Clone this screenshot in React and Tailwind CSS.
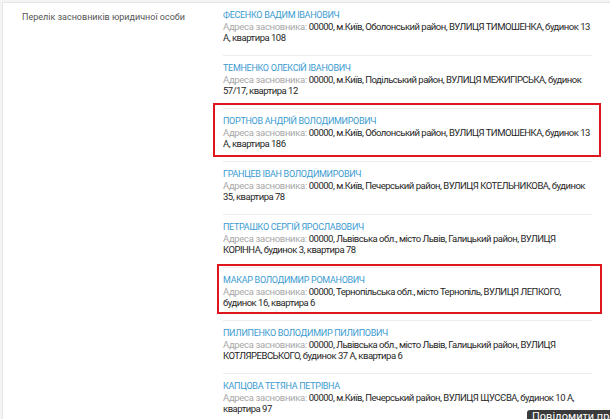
import React from 'react';

const founders = [
  { name: 'ФЕСЕНКО ВАДИМ ІВАНОВИЧ', addr: '00000, м.Київ, Оболонський район, ВУЛИЦЯ ТИМОШЕНКА, будинок 13 А, квартира 108' },
  { name: 'ТЕМНЕНКО ОЛЕКСІЙ ІВАНОВИЧ', addr: '00000, м.Київ, Подільський район, ВУЛИЦЯ МЕЖИГІРСЬКА, будинок 57/17, квартира 12' },
  { name: 'ПОРТНОВ АНДРІЙ ВОЛОДИМИРОВИЧ', addr: '00000, м.Київ, Оболонський район, ВУЛИЦЯ ТИМОШЕНКА, будинок 13 А, квартира 186' },
  { name: 'ГРАНЦЕВ ІВАН ВОЛОДИМИРОВИЧ', addr: '00000, м.Київ, Печерський район, ВУЛИЦЯ КОТЕЛЬНИКОВА, будинок 35, квартира 78' },
  { name: 'ПЕТРАШКО СЕРГІЙ ЯРОСЛАВОВИЧ', addr: '00000, Львівська обл., місто Львів, Галицький район, ВУЛИЦЯ КОРІННА, будинок 3, квартира 78' },
  { name: 'МАКАР ВОЛОДИМИР РОМАНОВИЧ', addr: '00000, Тернопільська обл., місто Тернопіль, ВУЛИЦЯ ЛЕПКОГО, будинок 16, квартира 6' },
  { name: 'ПИЛИПЕНКО ВОЛОДИМИР ПИЛИПОВИЧ', addr: '00000, Львівська обл., місто Львів, Галицький район, ВУЛИЦЯ КОТЛЯРЕВСЬКОГО, будинок 37 А, квартира 6' },
  { name: 'КАПЦОВА ТЕТЯНА ПЕТРІВНА', addr: '00000, м.Київ, Печерський район, ВУЛИЦЯ ЩУСЄВА, будинок 10 А, квартира 97' },
];

export default function App() {
  return (
    <div className="relative h-[419px] w-[610px] overflow-hidden bg-[#f4f4f4] pl-[2px] pt-[2px] font-['Roboto',sans-serif]">
      <div className="flex h-full border-l border-t border-[#e6e6e6] bg-white">
        {/* left label */}
        <div className="w-[220px] shrink-0 pl-[19px] pt-[9px] text-[9px] leading-[11px] text-[#555]">
          Перелік засновників юридичної особи
        </div>

        {/* founders list */}
        <div className="w-[369px] shrink-0">
          {founders.map((f) => (
            <div key={f.name} className="flex flex-col border-b border-[#ececec] pb-[12px] pt-[7px] leading-[11px]">
              <div className="text-[9px] tracking-[-0.3px] text-[#3a9bd0]">{f.name}</div>
              <p className="text-[9.5px] tracking-[-0.5px] text-[#262626]">
                <span className="tracking-[-0.32px] text-[#a8a8a8]">Адреса засновника:</span> {f.addr}
              </p>
            </div>
          ))}
        </div>
      </div>

      {/* highlight annotations */}
      <div className="absolute left-[213px] top-[103px] h-[54px] w-[388px] border-[2px] border-[#e0161e]" />
      <div className="absolute left-[217px] top-[264px] h-[50px] w-[385px] border-[2px] border-[#e0161e]" />

      {/* feedback tab */}
      <div className="absolute left-[527px] top-[410px] h-[14px] w-[100px] rounded-tl-[3px] bg-[#3b3b3b] pl-[5px] text-[11px] leading-[13px] whitespace-nowrap text-white">
        Повідомити про
      </div>
    </div>
  );
}
